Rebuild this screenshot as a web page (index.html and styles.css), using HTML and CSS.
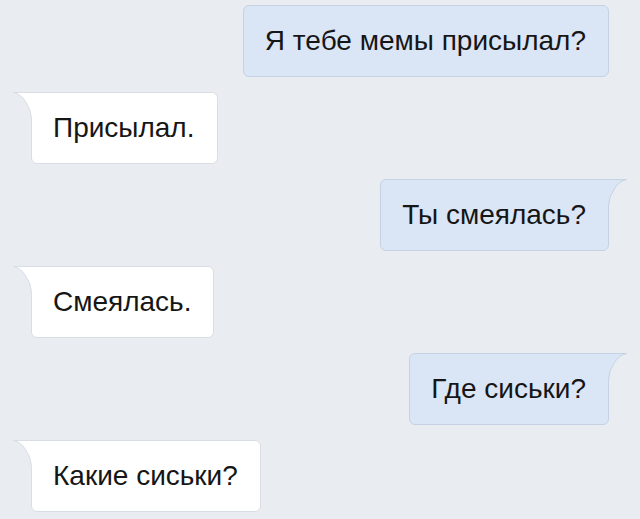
FILE: index.html
```html
<!DOCTYPE html>
<html lang="ru">
<head>
	<meta charset="UTF-8" />
	<meta name="viewport" content="width=device-width, initial-scale=1.0" />
	<title>Чат</title>
	<link rel="stylesheet" href="styles.css">
</head>
<body>
    <div class="chat">
        <div class="row out">
            <div class="bubble">Я тебе мемы присылал?</div>
        </div>
        <div class="row in">
            <div class="bubble tail">
                <svg class="tail-svg" width="19" height="27" viewBox="0 0 19 27">
                    <path d="M19 0 L0.5 0.5 Q8 2 12.5 9.5 Q18.5 18 18.5 27 L19 27 Z" fill="#ffffff" />
                    <path d="M19 0.5 L0.5 0.5 Q8 2 12.5 9.5 Q18.5 18 18.5 27" fill="none" stroke="#d9dee5" stroke-width="1" />
                </svg>
                Присылал.
            </div>
        </div>
        <div class="row out">
            <div class="bubble tail">
                <svg class="tail-svg" width="19" height="27" viewBox="0 0 19 27">
                    <path d="M0 0 L18.5 0.5 Q11 2 6.5 9.5 Q0.5 18 0.5 27 L0 27 Z" fill="#dae6f6" />
                    <path d="M0 0.5 L18.5 0.5 Q11 2 6.5 9.5 Q0.5 18 0.5 27" fill="none" stroke="#c4d2e3" stroke-width="1" />
                </svg>
                Ты смеялась?
            </div>
        </div>
        <div class="row in">
            <div class="bubble tail">
                <svg class="tail-svg" width="19" height="27" viewBox="0 0 19 27">
                    <path d="M19 0 L0.5 0.5 Q8 2 12.5 9.5 Q18.5 18 18.5 27 L19 27 Z" fill="#ffffff" />
                    <path d="M19 0.5 L0.5 0.5 Q8 2 12.5 9.5 Q18.5 18 18.5 27" fill="none" stroke="#d9dee5" stroke-width="1" />
                </svg>
                Смеялась.
            </div>
        </div>
        <div class="row out">
            <div class="bubble tail">
                <svg class="tail-svg" width="19" height="27" viewBox="0 0 19 27">
                    <path d="M0 0 L18.5 0.5 Q11 2 6.5 9.5 Q0.5 18 0.5 27 L0 27 Z" fill="#dae6f6" />
                    <path d="M0 0.5 L18.5 0.5 Q11 2 6.5 9.5 Q0.5 18 0.5 27" fill="none" stroke="#c4d2e3" stroke-width="1" />
                </svg>
                Где сиськи?
            </div>
        </div>
        <div class="row in">
            <div class="bubble tail">
                <svg class="tail-svg" width="19" height="27" viewBox="0 0 19 27">
                    <path d="M19 0 L0.5 0.5 Q8 2 12.5 9.5 Q18.5 18 18.5 27 L19 27 Z" fill="#ffffff" />
                    <path d="M19 0.5 L0.5 0.5 Q8 2 12.5 9.5 Q18.5 18 18.5 27" fill="none" stroke="#d9dee5" stroke-width="1" />
                </svg>
                Какие сиськи?
            </div>
        </div>
    </div>
</body>
</html>
```

FILE: styles.css
```css
body {
    margin: 0;
    background-color: #e9edf2;
    font-family: "Liberation Sans", Arial, sans-serif;
}

.chat {
    display: flex;
    flex-direction: column;
    gap: 15px;
    padding: 5px 31px 0 31px;
}

.row {
    display: flex;
}

.row.out {
    justify-content: flex-end;
}

.row.in {
    justify-content: flex-start;
}

.bubble {
    position: relative;
    box-sizing: border-box;
    height: 72px;
    display: flex;
    align-items: center;
    padding: 0 22px 1px 21px;
    font-size: 28px;
    color: #161616;
    border-radius: 6px;
}

.out .bubble {
    background-color: #dae6f6;
    border: 1px solid #c4d2e3;
}

.in .bubble {
    background-color: #ffffff;
    border: 1px solid #d9dee5;
}

.tail-svg {
    position: absolute;
    top: -1px;
}

.in .tail {
    border-top-left-radius: 0;
}

.in .tail-svg {
    left: -19px;
}

.out .tail {
    border-top-right-radius: 0;
}

.out .tail-svg {
    right: -19px;
}
```
